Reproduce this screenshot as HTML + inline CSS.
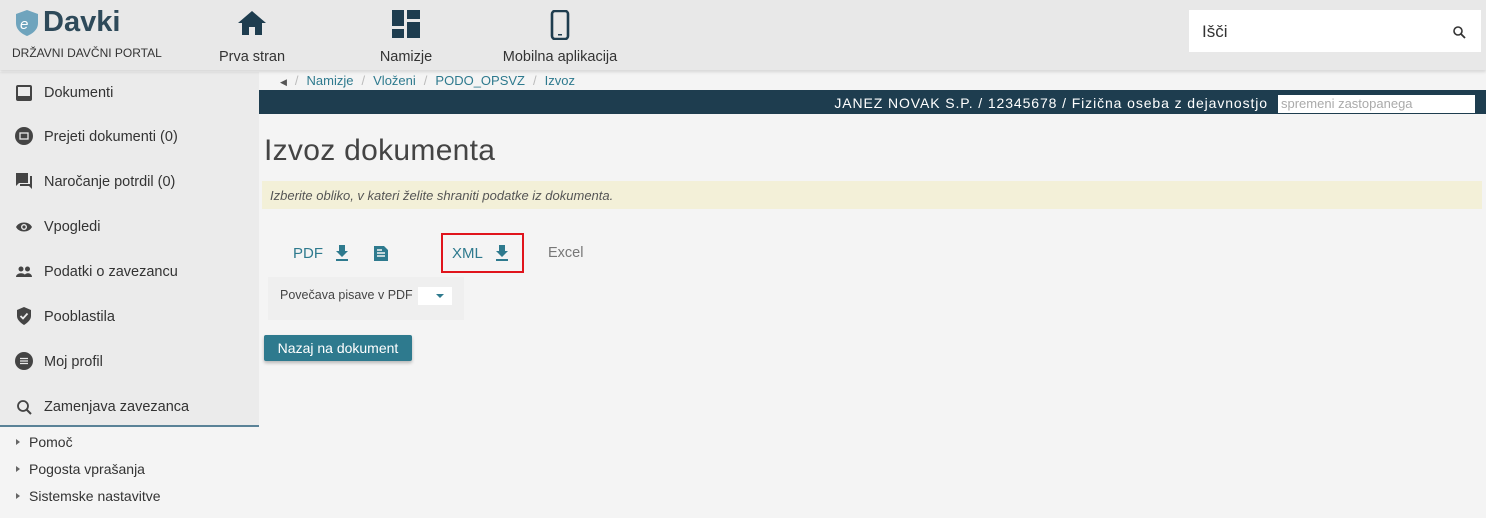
<!DOCTYPE html>
<html><head><meta charset="utf-8"><style>
*{box-sizing:border-box;margin:0;padding:0}
body{width:1486px;height:518px;overflow:hidden;background:#f4f4f4;font-family:"Liberation Sans",sans-serif;position:relative;color:#333}
.hdr{position:absolute;left:0;top:0;width:1486px;height:70px;background:#e8e8e8;box-shadow:0 2px 3px rgba(0,0,0,.12);z-index:2}
.abs{position:absolute}
.nav{position:absolute;top:0;text-align:center;font-size:14.5px;color:#333}
.side{position:absolute;left:0;top:72px;width:259px;height:355px;background:#ebebeb;border-bottom:2px solid #5a8297}
.si{position:absolute;left:44px;font-size:14.5px;color:#333}
.ic{position:absolute;left:15px;width:18px;height:18px}
.sub{position:absolute;left:16px;font-size:14px;color:#333}
.sub:before{content:"";display:inline-block;border-left:4px solid #666;border-top:3px solid transparent;border-bottom:3px solid transparent;margin-right:9px;vertical-align:2px}
.bc{position:absolute;top:73px;left:280px;font-size:13px;color:#2e7a8e}
.bc span.s{color:#bbb;margin:0 8px}
</style></head><body>
<div class="hdr">
 <svg class="abs" style="left:15px;top:9px" width="24" height="28" viewBox="0 0 24 28"><path d="M12 1 L23 5 V14 C23 21 17 25 12 27 C7 25 1 21 1 14 V5 Z" fill="#6fa4bd"/><text x="5" y="20" font-size="15" font-style="italic" fill="#fff" font-family="Liberation Sans">e</text></svg>
 <div class="abs" style="left:43px;top:6px;font-size:29px;font-weight:bold;color:#2e4a5a">Davki</div>
 <div class="abs" style="left:12px;top:46px;font-size:12px;color:#333">DRŽAVNI DAVČNI PORTAL</div>
 <div class="nav" style="left:212px;width:80px">
  <svg style="margin-top:10px" width="30" height="26" viewBox="0 0 30 26"><path d="M15 1 L29 13 H25 V25 H18 V17 H12 V25 H5 V13 H1 Z" fill="#1e3d4f"/></svg>
  <div style="margin-top:9px">Prva stran</div></div>
 <div class="nav" style="left:366px;width:80px">
  <svg style="margin-top:10px" width="28" height="28" viewBox="0 0 28 28" fill="#1e3d4f"><rect x="0" y="0" width="12" height="16"/><rect x="15" y="0" width="13" height="9"/><rect x="0" y="19" width="12" height="9"/><rect x="15" y="12" width="13" height="16"/></svg>
  <div style="margin-top:7px">Namizje</div></div>
 <div class="nav" style="left:500px;width:120px">
  <svg style="margin-top:10px" width="20" height="30" viewBox="0 0 20 30"><rect x="2" y="1" width="16" height="28" rx="3" fill="none" stroke="#1e3d4f" stroke-width="2.6"/><rect x="8" y="24" width="4" height="1.5" fill="#1e3d4f"/></svg>
  <div style="margin-top:5px">Mobilna aplikacija</div></div>
 <div class="abs" style="left:1189px;top:10px;width:292px;height:42px;background:#fff">
  <div class="abs" style="left:13px;top:12px;font-size:17px;color:#333">Išči</div>
  <svg class="abs" style="left:264px;top:16px" width="13" height="13" viewBox="0 0 13 13"><circle cx="5" cy="5" r="4" fill="none" stroke="#333" stroke-width="1.6"/><path d="M8 8 L12 12" stroke="#333" stroke-width="1.8"/></svg>
 </div>
</div>
<div class="side">
 <svg class="ic" style="top:12px" viewBox="0 0 18 18"><rect x="1" y="1" width="16" height="16" rx="2" fill="#444"/><rect x="3" y="3" width="12" height="9" fill="#ebebeb"/></svg><div class="si" style="top:13px">Dokumenti</div>
 <svg class="ic" style="top:55px" viewBox="0 0 18 18"><circle cx="9" cy="9" r="9" fill="#444"/><rect x="5" y="6" width="8" height="6" fill="none" stroke="#ebebeb" stroke-width="1.3"/></svg><div class="si" style="top:57px">Prejeti dokumenti (0)</div>
 <svg class="ic" style="top:100px" viewBox="0 0 18 18"><path d="M1 1 H13 V11 H4 L1 14 Z" fill="#444"/><path d="M15 4 H17 V17 L14 14 H5 V12 H15Z" fill="#444"/></svg><div class="si" style="top:102px">Naročanje potrdil (0)</div>
 <svg class="ic" style="top:146px" viewBox="0 0 18 18"><path d="M1 9 C4 3 14 3 17 9 C14 15 4 15 1 9Z" fill="#444"/><circle cx="9" cy="9" r="3" fill="#ebebeb"/><circle cx="9" cy="9" r="1.6" fill="#444"/></svg><div class="si" style="top:147px">Vpogledi</div>
 <svg class="ic" style="top:191px" viewBox="0 0 18 18"><circle cx="6" cy="6" r="2.5" fill="#444"/><circle cx="12.5" cy="6" r="2.5" fill="#444"/><path d="M1 14 C1 9 11 9 11 14Z M9 14 C9 9 17 9 17 14Z" fill="#444"/></svg><div class="si" style="top:192px">Podatki o zavezancu</div>
 <svg class="ic" style="top:235px" viewBox="0 0 18 18"><path d="M9 0 L16 3 V9 C16 13 12 16 9 18 C6 16 2 13 2 9 V3Z" fill="#444"/><path d="M5.5 9 L8 11.5 L12.5 6.5" stroke="#ebebeb" stroke-width="1.8" fill="none"/></svg><div class="si" style="top:237px">Pooblastila</div>
 <svg class="ic" style="top:280px" viewBox="0 0 18 18"><circle cx="9" cy="9" r="9" fill="#444"/><path d="M5 6.5H13M5 9H13M5 11.5H13" stroke="#ebebeb" stroke-width="1.2"/></svg><div class="si" style="top:282px">Moj profil</div>
 <svg class="ic" style="top:326px" viewBox="0 0 18 18"><circle cx="8" cy="8" r="5" fill="none" stroke="#444" stroke-width="1.8"/><path d="M11.5 11.5 L16 16" stroke="#444" stroke-width="2"/></svg><div class="si" style="top:327px">Zamenjava zavezanca</div>
</div>
<div class="sub" style="top:434px">Pomoč</div>
<div class="sub" style="top:461px">Pogosta vprašanja</div>
<div class="sub" style="top:488px">Sistemske nastavitve</div>
<div class="bc"><span style="color:#555;font-size:9px">◀</span><span class="s">/</span>Namizje<span class="s">/</span>Vloženi<span class="s">/</span>PODO_OPSVZ<span class="s">/</span>Izvoz</div>
<div class="abs" style="left:259px;top:90px;width:1227px;height:24px;background:#1e3d4f">
 <div class="abs" style="right:218px;top:5px;font-size:14px;color:#fff;letter-spacing:.9px;white-space:nowrap">JANEZ NOVAK S.P. / 12345678 / Fizična oseba z dejavnostjo</div>
 <div class="abs" style="left:1019px;top:5px;width:197px;height:18px;background:#fff;font-size:13px;color:#aaa;padding:1px 3px">spremeni zastopanega</div>
</div>
<div class="abs" style="left:264px;top:134px;font-size:30px;color:#444;letter-spacing:.3px">Izvoz dokumenta</div>
<div class="abs" style="left:262px;top:181px;width:1220px;height:28px;background:#f3f0d8;font-size:13px;font-style:italic;color:#555;padding:7px 8px">Izberite obliko, v kateri želite shraniti podatke iz dokumenta.</div>
<div class="abs" style="left:293px;top:245px;font-size:15px;color:#2e7a8e">PDF</div>
<svg class="abs" style="left:335px;top:245px" width="14" height="16" viewBox="0 0 14 16"><path d="M4 0H10V6H13L7 12L1 6H4Z M1 14H13V16H1Z" fill="#2e7a8e"/></svg>
<svg class="abs" style="left:373px;top:245px" width="16" height="17" viewBox="0 0 16 17"><path d="M1 1H11L15 5V16H1Z" fill="#2e7a8e"/><path d="M4 8H12M4 11H12M4 5H9" stroke="#f4f4f4" stroke-width="1.4"/></svg>
<div class="abs" style="left:441px;top:233px;width:83px;height:40px;border:2px solid #e0141c"></div>
<div class="abs" style="left:452px;top:245px;font-size:15px;color:#2e7a8e">XML</div>
<svg class="abs" style="left:495px;top:245px" width="14" height="16" viewBox="0 0 14 16"><path d="M4 0H10V6H13L7 12L1 6H4Z M1 14H13V16H1Z" fill="#2e7a8e"/></svg>
<div class="abs" style="left:548px;top:245px;font-size:14.5px;color:#777">Excel</div>
<div class="abs" style="left:268px;top:277px;width:196px;height:43px;background:#efefef"></div>
<div class="abs" style="left:280px;top:288px;font-size:12.5px;color:#444">Povečava pisave v PDF</div>
<div class="abs" style="left:418px;top:287px;width:34px;height:18px;background:#fff"><div class="abs" style="left:18px;top:7px;border-top:4px solid #2e7a8e;border-left:4px solid transparent;border-right:4px solid transparent"></div></div>
<div class="abs" style="left:264px;top:335px;width:148px;height:26px;background:#2e7a8e;border-radius:2px;color:#fff;font-size:14px;text-align:center;line-height:26px;box-shadow:0 2px 3px rgba(0,0,0,.25)">Nazaj na dokument</div>
</body></html>
